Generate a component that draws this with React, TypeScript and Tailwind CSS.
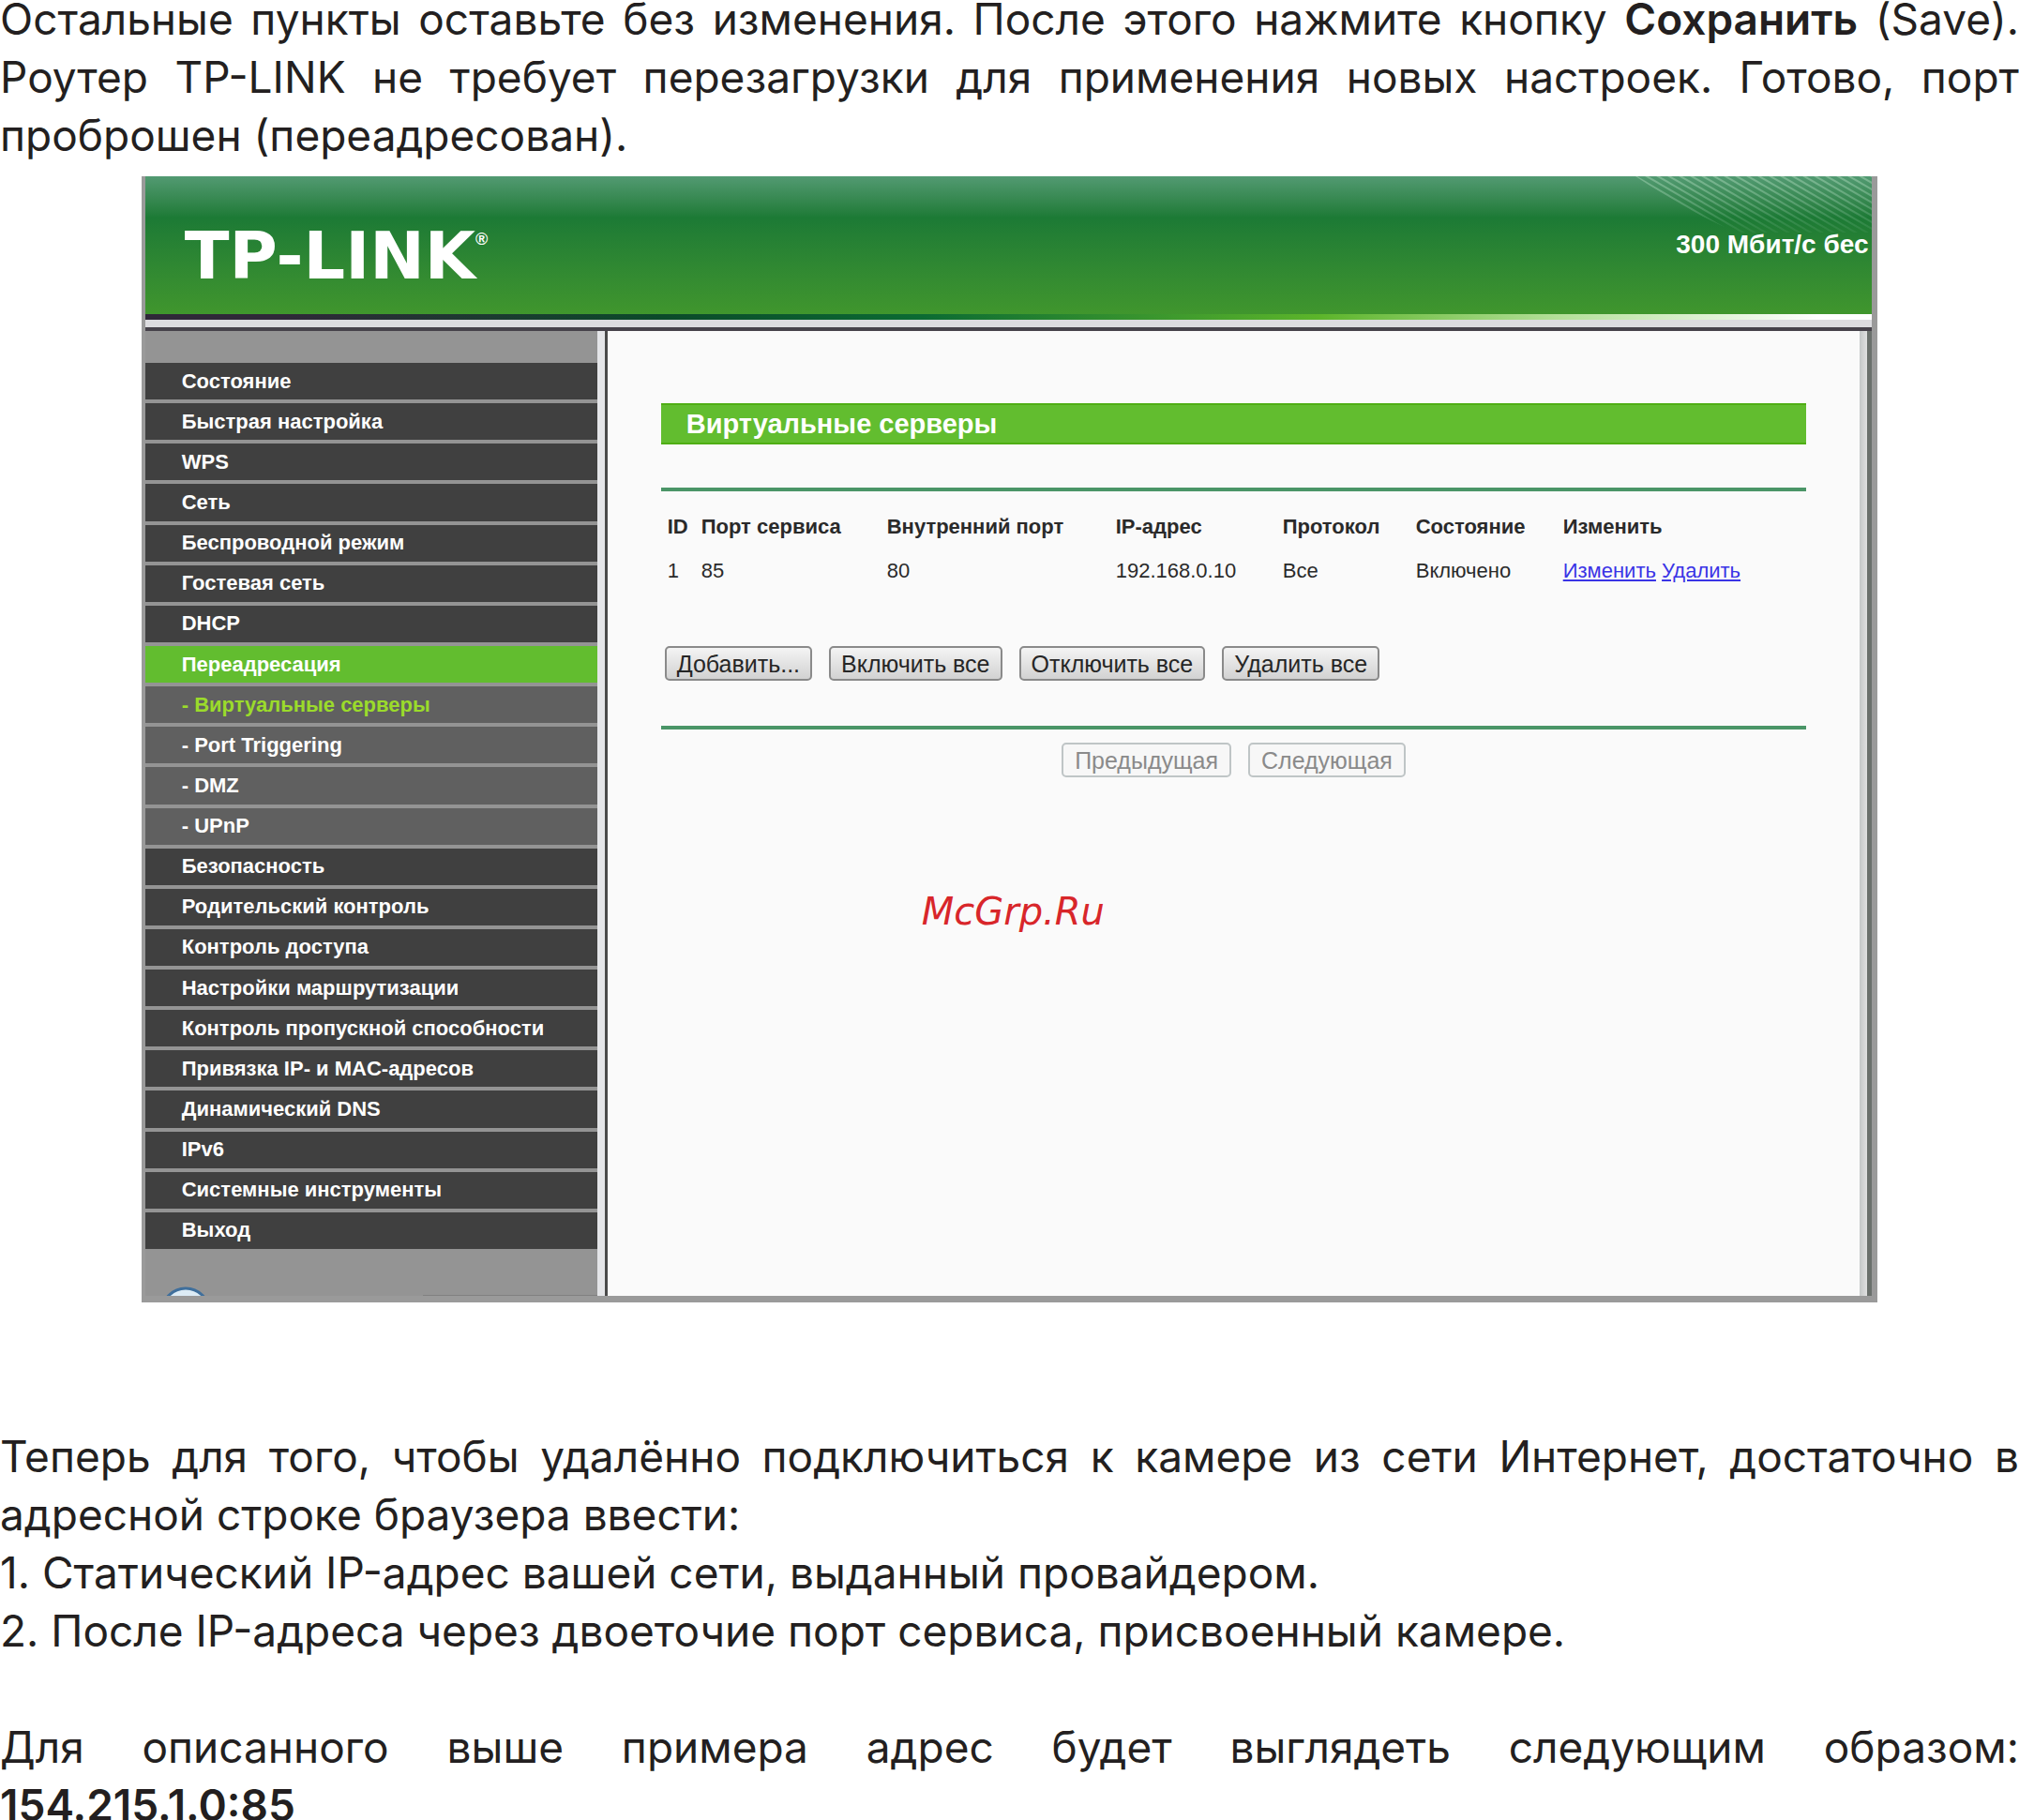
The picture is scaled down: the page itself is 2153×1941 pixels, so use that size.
const paragraph = 'text-justify text-[46px]/[62px]';

type MenuItem = { label: string; kind?: 'active' | 'sub' | 'subActive' };

const menu: MenuItem[] = [
  { label: 'Состояние' },
  { label: 'Быстрая настройка' },
  { label: 'WPS' },
  { label: 'Сеть' },
  { label: 'Беспроводной режим' },
  { label: 'Гостевая сеть' },
  { label: 'DHCP' },
  { label: 'Переадресация', kind: 'active' },
  { label: '- Виртуальные серверы', kind: 'subActive' },
  { label: '- Port Triggering', kind: 'sub' },
  { label: '- DMZ', kind: 'sub' },
  { label: '- UPnP', kind: 'sub' },
  { label: 'Безопасность' },
  { label: 'Родительский контроль' },
  { label: 'Контроль доступа' },
  { label: 'Настройки маршрутизации' },
  { label: 'Контроль пропускной способности' },
  { label: 'Привязка IP- и MAC-адресов' },
  { label: 'Динамический DNS' },
  { label: 'IPv6' },
  { label: 'Системные инструменты' },
  { label: 'Выход' },
];

const itemStyle = {
  plain: 'bg-[#404040] text-white',
  active: 'bg-[#62bd2f] text-white',
  sub: 'bg-[#606060] text-white',
  subActive: 'bg-[#606060] text-[#9bdb2b]',
};

const actions = ['Добавить...', 'Включить все', 'Отключить все', 'Удалить все'];
const pages = ['Предыдущая', 'Следующая'];

function Header() {
  return (
    <header className="relative flex h-[147px] items-start justify-between overflow-hidden bg-linear-to-b from-[#529a72] via-[#1c7a35] via-30% to-[#40962d]">
      <svg className="absolute top-0 right-0 h-[60px] w-[252px]" viewBox="0 0 252 60" aria-hidden="true">
        <defs>
          <pattern id="stripes" width="12" height="7" patternUnits="userSpaceOnUse">
            <path d="M-12 -7L24 14M0 -7L24 7M-12 0L12 14" stroke="#8fc4a2" strokeWidth="2" />
          </pattern>
          <linearGradient id="fade" x1="0" y1="0" x2="0" y2="1">
            <stop offset="0" stopColor="#fff" stopOpacity="0.7" />
            <stop offset="1" stopColor="#fff" stopOpacity="0.1" />
          </linearGradient>
          <mask id="corner">
            <path d="M0 0C30 20 70 45 110 60H252V0Z" fill="url(#fade)" />
          </mask>
        </defs>
        <rect width="252" height="60" fill="url(#stripes)" mask="url(#corner)" />
      </svg>
      <div className="mt-[50px] ml-[42px] flex items-start text-white">
        <span className="font-['DejaVu_Sans'] text-[70px]/[70px] font-bold">TP-LINK</span>
        <span className="mt-2 text-[18px]/[18px] font-bold">®</span>
      </div>
      <p className="relative mt-[57px] w-[209px] overflow-hidden text-[28px]/[32px] font-bold whitespace-nowrap text-white">300 Мбит/с бес</p>
    </header>
  );
}

function Sidebar() {
  return (
    <nav className="relative w-[482px] shrink-0 overflow-hidden bg-[#949494] pt-[34px]">
      <ul className="grid min-h-[945px] auto-rows-fr gap-1">
        {menu.map((item) => (
          <li key={item.label} className={`flex items-center pl-[39px] ${itemStyle[item.kind ?? 'plain']}`}>
            <a href="#" className="text-[22px]/[26px] font-bold whitespace-nowrap">{item.label}</a>
          </li>
        ))}
      </ul>
      <svg className="absolute bottom-0 left-[20px] h-[10px] w-[46px]" viewBox="0 0 46 10" aria-hidden="true">
        <circle cx="23" cy="27" r="25" fill="#dcebf5" stroke="#3f6f9c" strokeWidth="3" />
      </svg>
      <div className="absolute right-0 bottom-0 h-px w-[186px] bg-[#808080]" />
    </nav>
  );
}

function ServerTable() {
  return (
    <table className="w-full table-fixed text-left text-[22px]/[26px] text-[#2a2a2a]">
      <colgroup>
        <col className="w-[43px]" />
        <col className="w-[198px]" />
        <col className="w-[244px]" />
        <col className="w-[178px]" />
        <col className="w-[142px]" />
        <col className="w-[157px]" />
        <col />
      </colgroup>
      <thead>
        <tr className="h-[47px] whitespace-nowrap">
          <th className="pl-[7px]">ID</th>
          <th>Порт сервиса</th>
          <th>Внутренний порт</th>
          <th>IP-адрес</th>
          <th>Протокол</th>
          <th>Состояние</th>
          <th>Изменить</th>
        </tr>
      </thead>
      <tbody>
        <tr className="h-[47px] whitespace-nowrap">
          <td className="pl-[7px]">1</td>
          <td>85</td>
          <td>80</td>
          <td>192.168.0.10</td>
          <td>Все</td>
          <td>Включено</td>
          <td className="text-[#3a34e6]">
            <a href="#" className="underline">Изменить</a> <a href="#" className="underline">Удалить</a>
          </td>
        </tr>
      </tbody>
    </table>
  );
}

function Content() {
  return (
    <main className="relative min-w-0 flex-1 bg-[#fafafa] pt-[77px] pr-[57px] pl-[57px]">
      <h1 className="h-[44px] border-y-2 border-[#4fae14] bg-[#62bd2f] pl-[27px] text-[29px]/[40px] font-bold text-white">Виртуальные серверы</h1>
      <hr className="mt-[46px] mb-[14px] border-t-4 border-[#4a9567]" />
      <ServerTable />
      <div className="mt-[57px] flex gap-[18px] pl-1">
        {actions.map((label) => (
          <button
            key={label}
            type="button"
            className="h-[37px] rounded-[5px] border-2 border-[#8a8a8a] bg-linear-to-b from-[#f4f4f4] to-[#d2d2d2] px-[11px] text-[25px]/[32px] whitespace-nowrap text-[#262626]"
          >
            {label}
          </button>
        ))}
      </div>
      <hr className="mt-[48px] mb-[14px] border-t-4 border-[#4a9567]" />
      <div className="flex justify-center gap-[18px]">
        {pages.map((label) => (
          <button
            key={label}
            type="button"
            disabled
            className="h-[37px] rounded-[5px] border-2 border-[#bfc5c6] bg-[#f7f7f7] px-3 text-[25px]/[32px] whitespace-nowrap text-[#8a8a8a]"
          >
            {label}
          </button>
        ))}
      </div>
      <span className="absolute top-[597px] left-[335px] font-['DejaVu_Sans'] text-[40px]/[44px] text-[#d8262a] italic">McGrp.Ru</span>
    </main>
  );
}

function RouterPanel() {
  return (
    <section className="mx-[7%] mt-[13px] border-r-[6px] border-b-[7px] border-l-4 border-[#9a9a9a] font-['Liberation_Sans',sans-serif]">
      <Header />
      <div className="h-[6px] bg-[linear-gradient(to_right,#2f2838_8%,#0b4a2a_30%,#0b6b33_45%,#5cb52a_68%,#b5e09a_82%,#ffffff_97%)]" />
      <div className="h-2 bg-[#dcdcdf]" />
      <div className="h-1 bg-[#46424a]" />
      <div className="flex min-h-[1029px]">
        <Sidebar />
        <div className="w-2 shrink-0 bg-[#e4e5e8]" />
        <div className="w-[3px] shrink-0 bg-[#4a4a4a]" />
        <Content />
        <div className="w-2 shrink-0 bg-linear-to-r from-[#c4c8c8] to-[#e0e0e0]" />
        <div className="w-[5px] shrink-0 bg-[#6a706c]" />
      </div>
    </section>
  );
}

export default function App() {
  return (
    <div className="-mt-[11px] bg-white font-['Inter',sans-serif] text-[#231f20]">
      <p className={paragraph}>
        Остальные пункты оставьте без изменения. После этого нажмите кнопку{' '}
        <b className="font-semibold">Сохранить</b> (Save). Роутер TP-LINK не требует перезагрузки для применения новых
        настроек. Готово, порт проброшен (переадресован).
      </p>
      <RouterPanel />
      <div className="mt-[133px]">
        <p className={paragraph}>
          Теперь для того, чтобы удалённо подключиться к камере из сети Интернет, достаточно в адресной строке браузера
          ввести:
        </p>
        <p className={paragraph}>1. Статический IP-адрес вашей сети, выданный провайдером.</p>
        <p className={paragraph}>2. После IP-адреса через двоеточие порт сервиса, присвоенный камере.</p>
        <p className={`${paragraph} mt-[62px] [text-align-last:justify]`}>
          Для описанного выше примера адрес будет выглядеть следующим образом:
        </p>
        <p className={`${paragraph} font-semibold`}>154.215.1.0:85</p>
      </div>
    </div>
  );
}
